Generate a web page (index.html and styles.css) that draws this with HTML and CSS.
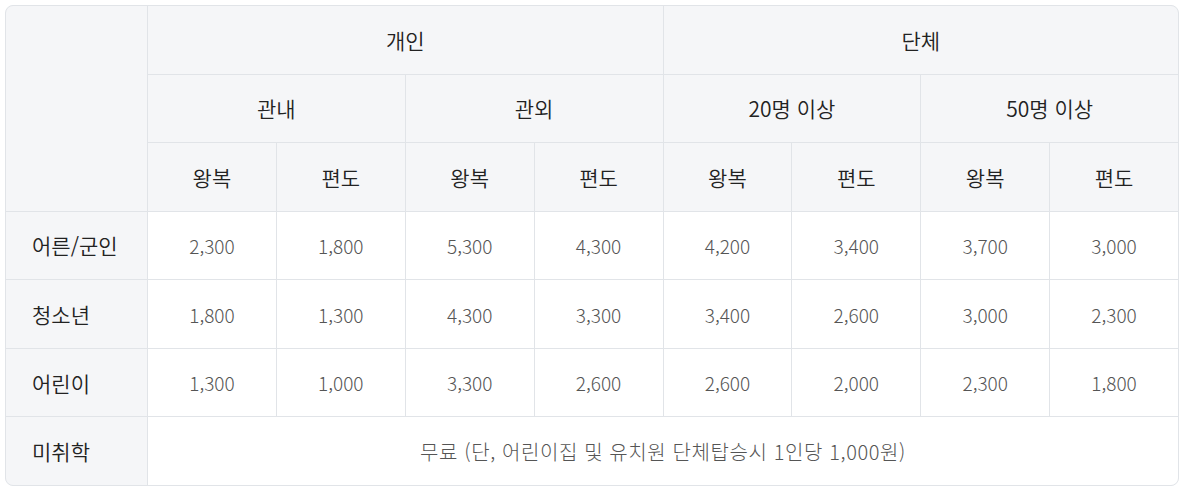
FILE: index.html
```html
<!DOCTYPE html>
<html lang="ko">
<head>
<meta charset="utf-8">
<title>요금표</title>
<link rel="stylesheet" href="styles.css">
</head>
<body>
<div class="fare">
  <div class="cell head corner"></div>
  <div class="cell head span4">개인</div>
  <div class="cell head span4">단체</div>
  <div class="cell head span2">관내</div>
  <div class="cell head span2">관외</div>
  <div class="cell head span2">20명 이상</div>
  <div class="cell head span2">50명 이상</div>
  <div class="cell head">왕복</div>
  <div class="cell head">편도</div>
  <div class="cell head">왕복</div>
  <div class="cell head">편도</div>
  <div class="cell head">왕복</div>
  <div class="cell head">편도</div>
  <div class="cell head">왕복</div>
  <div class="cell head">편도</div>

  <div class="cell label">어른/군인</div>
  <div class="cell">2,300</div><div class="cell">1,800</div><div class="cell">5,300</div><div class="cell">4,300</div>
  <div class="cell">4,200</div><div class="cell">3,400</div><div class="cell">3,700</div><div class="cell">3,000</div>

  <div class="cell label">청소년</div>
  <div class="cell">1,800</div><div class="cell">1,300</div><div class="cell">4,300</div><div class="cell">3,300</div>
  <div class="cell">3,400</div><div class="cell">2,600</div><div class="cell">3,000</div><div class="cell">2,300</div>

  <div class="cell label">어린이</div>
  <div class="cell">1,300</div><div class="cell">1,000</div><div class="cell">3,300</div><div class="cell">2,600</div>
  <div class="cell">2,600</div><div class="cell">2,000</div><div class="cell">2,300</div><div class="cell">1,800</div>

  <div class="cell label">미취학</div>
  <div class="cell span8 note">무료 (단, 어린이집 및 유치원 단체탑승시 1인당 1,000원)</div>
</div>
</body>
</html>
```
FILE: styles.css
```css
html, body {
  margin: 0;
  padding: 0;
  background: #ffffff;
}
body {
  padding: 5px 6px 5px 5px;
  font-family: "Noto Sans CJK KR", "Noto Sans", sans-serif;
}
.fare {
  display: grid;
  grid-template-columns: 141px repeat(8, 1fr);
  grid-template-rows: repeat(7, 1fr);
  gap: 1px;
  height: 479px;
  background: #e1e4e8;
  border: 1px solid #e1e4e8;
  border-radius: 8px;
  overflow: hidden;
}
.cell {
  background: #ffffff;
  display: flex;
  align-items: center;
  justify-content: center;
  font-size: 19px;
  font-weight: 300;
  color: #555555;
}
.note {
  font-size: 20px;
  letter-spacing: 0.6px;
}
.head {
  background: #f5f6f8;
  font-size: 21px;
  font-weight: 350;
  color: #222222;
}
.corner {
  grid-row: 1 / span 3;
}
.span4 { grid-column: span 4; }
.span2 { grid-column: span 2; }
.span8 { grid-column: span 8; }
.label {
  background: #f5f6f8;
  justify-content: flex-start;
  padding-left: 26px;
  font-size: 21px;
  font-weight: 350;
  color: #222222;
}
```
